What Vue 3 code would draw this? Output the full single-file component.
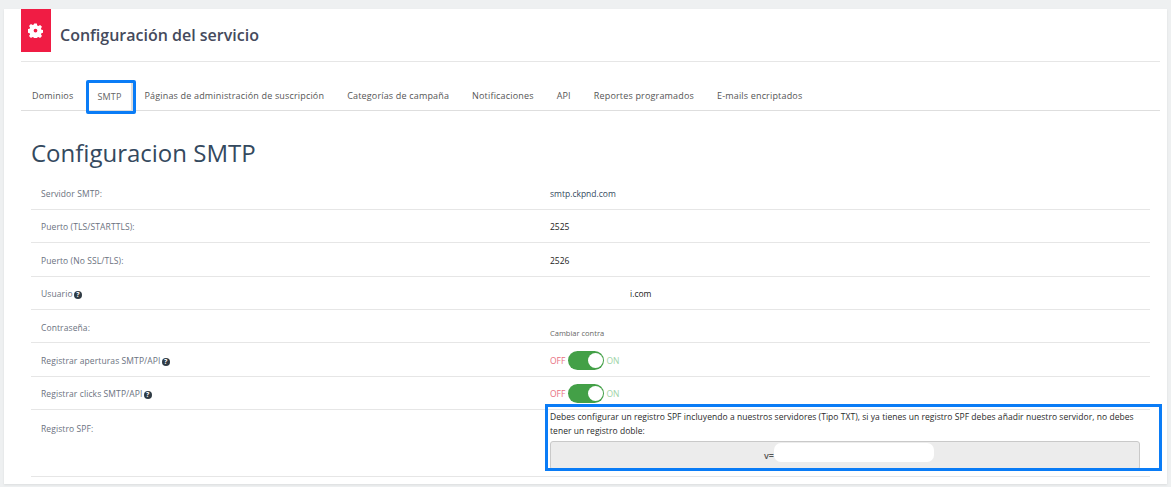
<script setup>
const tabs = [
  'Dominios',
  'SMTP',
  'Páginas de administración de suscripción',
  'Categorías de campaña',
  'Notificaciones',
  'API',
  'Reportes programados',
  'E-mails encriptados',
]
</script>

<template>
  <div class="page">
    <div class="card">
      <header class="head">
        <div class="head-icon">
          <svg width="15" height="15" viewBox="0 0 16 16">
            <path
              fill="#fff"
              fill-rule="evenodd"
              d="M6.6 0.6h2.8l.4 2 1.3.6 1.8-1.1 2 2-1.1 1.8.5 1.2 2.1.5v2.8l-2.1.5-.5 1.2 1.1 1.8-2 2-1.8-1.1-1.3.6-.4 2H6.6l-.4-2-1.3-.6-1.8 1.100-2-2 1.100-1.800-.5-1.200-2.100-.5V6.600l2.100-.5.5-1.200-1.100-1.800 2-2 1.800 1.100 1.300-.6zM8 6a2 2 0 1 0 0 4 2 2 0 0 0 0-4z"
            />
          </svg>
        </div>
        <h2 class="head-title">Configuración del servicio</h2>
      </header>

      <nav class="tabs">
        <a v-for="t in tabs" :key="t" class="tab" :class="{ active: t === 'SMTP' }">{{ t }}</a>
      </nav>

      <section class="content">
        <h1 class="title">Configuracion SMTP</h1>

        <div class="row">
          <div class="label">Servidor SMTP:</div>
          <div class="value">smtp.ckpnd.com</div>
        </div>
        <div class="row">
          <div class="label">Puerto (TLS/STARTTLS):</div>
          <div class="value dark">2525</div>
        </div>
        <div class="row">
          <div class="label">Puerto (No SSL/TLS):</div>
          <div class="value dark">2526</div>
        </div>
        <div class="row">
          <div class="label">Usuario <span class="help">?</span></div>
          <div class="value dark user">i.com</div>
        </div>
        <div class="row">
          <div class="label">Contraseña:</div>
          <div class="value pass"><span>Cambiar contra</span></div>
        </div>
        <div class="row">
          <div class="label">Registrar aperturas SMTP/API <span class="help">?</span></div>
          <div class="value switch">
            <span class="off">OFF</span><span class="toggle"></span><span class="on">ON</span>
          </div>
        </div>
        <div class="row">
          <div class="label">Registrar clicks SMTP/API <span class="help">?</span></div>
          <div class="value switch">
            <span class="off">OFF</span><span class="toggle"></span><span class="on">ON</span>
          </div>
        </div>
        <div class="row spf">
          <div class="label">Registro SPF:</div>
          <div class="value spf-box">
            <p class="spf-text">
              Debes configurar un registro SPF incluyendo a nuestros servidores (Tipo TXT), si ya tienes un registro SPF debes añadir nuestro servidor, no debes tener un registro doble:
            </p>
            <div class="code"><span class="code-txt">v=</span><span class="mask"></span></div>
          </div>
        </div>
      </section>
    </div>
  </div>
</template>

<style scoped>
.page {
  height: 487px;
  box-sizing: border-box;
  padding: 9px 4px 3px;
  background: #eef0f1;
  overflow: hidden;
  font-family: "Open Sans", sans-serif;
}
.card {
  height: 100%;
  box-sizing: border-box;
  padding: 0 7px 0 17px;
  background: #fff;
  box-shadow: 0 1px 2px rgba(0, 0, 0, 0.08);
}
.head {
  display: flex;
  align-items: flex-start;
  height: 52px;
  border-bottom: 1px solid #e6e6e6;
}
.head-icon {
  display: flex;
  align-items: center;
  justify-content: center;
  width: 30px;
  height: 43px;
  padding-right: 1px;
  box-sizing: border-box;
  background: #f01c44;
}
.head-title {
  margin: 13px 0 0 9px;
  font-size: 16px;
  line-height: 26px;
  font-weight: 600;
  color: #454a5c;
}
.tabs {
  display: flex;
  height: 48px;
  border-bottom: 1px solid #dedede;
}
.tab {
  box-sizing: border-box;
  height: 34px;
  margin-top: 18px;
  padding: 0 12px 0 11px;
  font-size: 9px;
  line-height: 32px;
  letter-spacing: 0.17px;
  color: #555;
  white-space: nowrap;
}
.tab.active {
  padding: 0 11px 0 8px;
  margin-left: 1px;
  margin-right: -2px;
  border: 3px solid #0a7cf6;
  border-radius: 2px;
  line-height: 28px;
  color: #666;
  box-shadow: inset -2px 0 0 #ddd, inset 0 -1px 0 #ddd;
}
.content {
  padding: 0 10px;
}
.title {
  margin: 24px 0 5.4px;
  font-size: 24px;
  line-height: 36px;
  font-weight: 400;
  color: #34495e;
}
.row {
  display: flex;
  align-items: center;
  height: 33.4px;
  box-sizing: border-box;
  padding-top: 2px;
  border-bottom: 1px solid #e6e6e6;
  font-size: 8.5px;
}
.label {
  width: 519px;
  flex: none;
  padding-left: 10px;
  box-sizing: border-box;
  color: #6b7280;
  letter-spacing: 0.1px;
}
.help {
  display: inline-block;
  width: 8px;
  height: 8px;
  margin-left: -1px;
  border-radius: 50%;
  background: #2f3b45;
  color: #fff;
  font-size: 7px;
  line-height: 8px;
  font-weight: 700;
  text-align: center;
}
.value {
  color: #34495e;
}
.value.dark {
  color: #222;
}
.user {
  padding-left: 80px;
}
.pass {
  padding-top: 12px;
  font-size: 7.5px;
  color: #666;
}
.switch {
  display: flex;
  align-items: center;
}
.off {
  color: #e8707f;
}
.on {
  color: #9ed3a6;
}
.toggle {
  position: relative;
  width: 36px;
  height: 19px;
  margin: 0 2px 0 3px;
  border-radius: 10px;
  background: #43a047;
}
.toggle::after {
  content: "";
  position: absolute;
  top: 2px;
  right: 1px;
  width: 15px;
  height: 15px;
  border-radius: 50%;
  background: #fff;
}
.row.spf {
  height: 67px;
  padding-top: 0;
  align-items: flex-start;
}
.row.spf .label {
  padding-top: 13px;
}
.spf-box {
  position: relative;
  width: 590px;
  color: #2b2b2b;
}
/* marca azul de la captura, va encima de las filas */
.spf-box::after {
  content: "";
  position: absolute;
  top: -6px;
  left: -5px;
  width: 611px;
  height: 61px;
  border: 3px solid #0a7cf6;
  pointer-events: none;
}
.spf-text {
  margin: 0;
  font-size: 8.5px;
  line-height: 14px;
  height: 28px;
  letter-spacing: 0.05px;
}
.code {
  display: flex;
  align-items: flex-start;
  justify-content: center;
  box-sizing: border-box;
  height: 29px;
  margin-top: 3px;
  padding: 1px 0 0 8px;
  border: 1px solid #c9c9c9;
  border-radius: 3px;
  background: #ececec;
  color: #555;
  font-size: 9px;
  font-weight: 600;
}
.code-txt {
  margin-top: 6px;
}
.mask {
  width: 160px;
  height: 19px;
  border-radius: 7px;
  background: #fff;
}
</style>
